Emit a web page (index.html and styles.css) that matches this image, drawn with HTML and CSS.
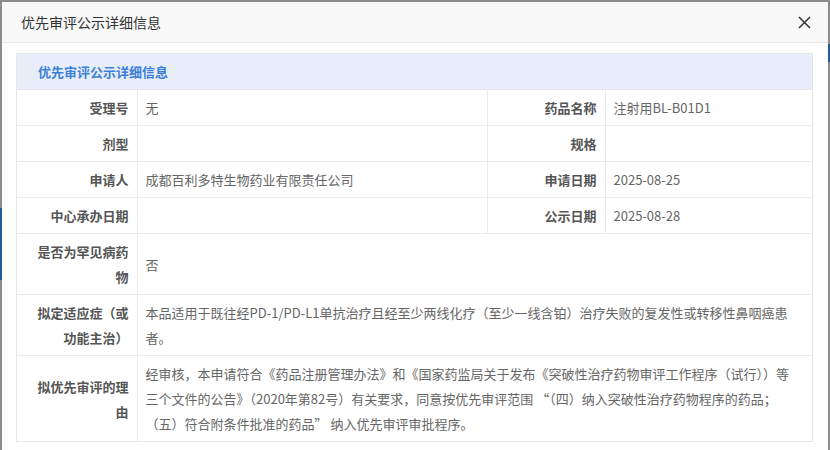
FILE: index.html
```html
<!DOCTYPE html>
<html lang="zh-CN">
<head>
  <meta charset="UTF-8" />
  <title>优先审评公示详细信息</title>
  <link rel="stylesheet" href="styles.css">
</head>
<body>
  <div class="page-bg-left"></div>
  <div class="page-bg-right"></div>

  <div class="modal">
    <div class="modal-header">
      <span class="modal-title">优先审评公示详细信息</span>
      <span class="modal-close">
        <svg width="13" height="13" viewBox="0 0 13 13">
          <path d="M1 1 L12 12 M12 1 L1 12" stroke="#333" stroke-width="1.5" fill="none" />
        </svg>
      </span>
    </div>

    <div class="modal-body">
      <div class="panel">
        <div class="panel-heading">优先审评公示详细信息</div>
        <table class="detail-table">
          <colgroup>
            <col class="col-label">
            <col class="col-value">
            <col class="col-label2">
            <col class="col-value2">
          </colgroup>
          <tr>
            <td class="label">受理号</td>
            <td>无</td>
            <td class="label">药品名称</td>
            <td>注射用BL-B01D1</td>
          </tr>
          <tr>
            <td class="label">剂型</td>
            <td></td>
            <td class="label">规格</td>
            <td></td>
          </tr>
          <tr>
            <td class="label">申请人</td>
            <td>成都百利多特生物药业有限责任公司</td>
            <td class="label">申请日期</td>
            <td>2025-08-25</td>
          </tr>
          <tr>
            <td class="label">中心承办日期</td>
            <td></td>
            <td class="label">公示日期</td>
            <td>2025-08-28</td>
          </tr>
          <tr>
            <td class="label">是否为罕见病药物</td>
            <td class="wide" colspan="3">否</td>
          </tr>
          <tr>
            <td class="label">拟定适应症（或功能主治）</td>
            <td class="wide" colspan="3">本品适用于既往经PD-1/PD-L1单抗治疗且经至少两线化疗（至少一线含铂）治疗失败的复发性或转移性鼻咽癌患者。</td>
          </tr>
          <tr>
            <td class="label">拟优先审评的理由</td>
            <td class="wide" colspan="3">经审核，本申请符合《药品注册管理办法》和《国家药监局关于发布《突破性治疗药物审评工作程序（试行））等三个文件的公告》（2020年第82号）有关要求，同意按优先审评范围 “（四）纳入突破性治疗药物程序的药品；<br>（五）符合附条件批准的药品” 纳入优先审评审批程序。</td>
          </tr>
        </table>
      </div>
    </div>
  </div>
</body>
</html>
```

FILE: styles.css
```css
/* Global */
* {
  box-sizing: border-box;
  margin: 0;
  padding: 0;
}
body {
  background: #8c8c8c;
  font-family: "Noto Sans CJK SC", "Noto Sans", sans-serif;
  font-size: 13px;
  color: #333;
  height: 450px;
  overflow: hidden;
  position: relative;
}

/* bits of the page behind the dialog */
.page-bg-left {
  position: absolute;
  left: 0;
  top: 208px;
  width: 2px;
  height: 72px;
  background: #1f5c9a;
}
.page-bg-right {
  position: absolute;
  right: 0;
  top: 44px;
  width: 2px;
  height: 18px;
  background: #1f5c9a;
}

/* Dialog */
.modal {
  position: relative;
  margin: 2px 2px 0 2px;
  background: #fff;
  height: 460px;
}
.modal-header {
  display: flex;
  justify-content: space-between;
  align-items: center;
  height: 41px;
  padding: 0 17px 0 19px;
  background: #f8f8f8;
  border-bottom: 1px solid #e8e8e8;
}
.modal-title {
  font-size: 14px;
  color: #333;
}
.modal-close {
  display: flex;
  align-items: center;
  cursor: pointer;
}

.modal-body {
  padding: 10px 15px 0 14px;
}

/* Panel */
.panel {
  border: 1px solid #e6e6e6;
}
.panel-heading {
  height: 36px;
  line-height: 36px;
  padding-left: 21px;
  background: #e8eef9;
  color: #3b7fd9;
  font-weight: bold;
  font-size: 13px;
  border-bottom: 1px solid #e6e6e6;
}

.detail-table {
  width: 100%;
  border-collapse: collapse;
  table-layout: fixed;
}
.col-label { width: 120px; }
.col-value { width: 350px; }
.col-label2 { width: 118px; }
.detail-table td {
  border: 1px solid #ebebeb;
  padding: 5px 8px;
  line-height: 25px;
  color: #666;
  vertical-align: middle;
  word-break: break-all;
}
.detail-table td.wide {
  padding-right: 12px;
}
.detail-table tr:first-child td {
  border-top: none;
}
.detail-table tr:last-child td {
  border-bottom: none;
}
.detail-table td:first-child {
  border-left: none;
}
.detail-table td:last-child {
  border-right: none;
}
.detail-table td.label {
  text-align: right;
  font-weight: bold;
  color: #555;
}
```
